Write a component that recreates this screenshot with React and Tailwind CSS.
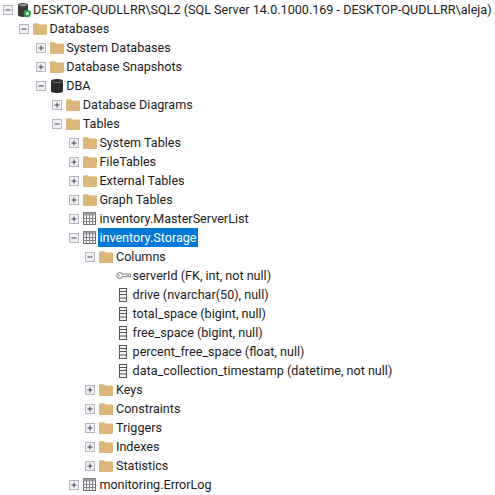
const tree = [
  {
    label: 'DESKTOP-QUDLLRR\\SQL2 (SQL Server 14.0.1000.169 - DESKTOP-QUDLLRR\\aleja)',
    icon: 'server',
    open: true,
    children: [
      {
        label: 'Databases',
        open: true,
        children: [
          { label: 'System Databases', closed: true },
          { label: 'Database Snapshots', closed: true },
          {
            label: 'DBA',
            icon: 'db',
            open: true,
            children: [
              { label: 'Database Diagrams', closed: true },
              {
                label: 'Tables',
                open: true,
                children: [
                  { label: 'System Tables', closed: true },
                  { label: 'FileTables', closed: true },
                  { label: 'External Tables', closed: true },
                  { label: 'Graph Tables', closed: true },
                  { label: 'inventory.MasterServerList', icon: 'table', closed: true },
                  {
                    label: 'inventory.Storage',
                    icon: 'table',
                    open: true,
                    selected: true,
                    children: [
                      {
                        label: 'Columns',
                        open: true,
                        children: [
                          { label: 'serverId (FK, int, not null)', icon: 'key' },
                          { label: 'drive (nvarchar(50), null)', icon: 'column' },
                          { label: 'total_space (bigint, null)', icon: 'column' },
                          { label: 'free_space (bigint, null)', icon: 'column' },
                          { label: 'percent_free_space (float, null)', icon: 'column' },
                          { label: 'data_collection_timestamp (datetime, not null)', icon: 'column' },
                        ],
                      },
                      { label: 'Keys', closed: true },
                      { label: 'Constraints', closed: true },
                      { label: 'Triggers', closed: true },
                      { label: 'Indexes', closed: true },
                      { label: 'Statistics', closed: true },
                    ],
                  },
                  { label: 'monitoring.ErrorLog', icon: 'table', closed: true },
                ],
              },
            ],
          },
        ],
      },
    ],
  },
];

function Expander({ open }) {
  return (
    <svg width="10" height="10" viewBox="0 0 10 10" className="shrink-0">
      <rect x="0.5" y="0.5" width="9" height="9" fill="#eef0f4" stroke="#b4b8bd" />
      <path d="M2.5 5h5" stroke="#3f4a5e" strokeWidth="1" />
      {!open && <path d="M5 2.5v5" stroke="#3f4a5e" strokeWidth="1" />}
    </svg>
  );
}

function NodeIcon({ type }) {
  if (type === 'server') {
    return (
      <svg width="16" height="16" viewBox="0 0 16 16">
        <path d="M2 3.2C2 1.8 4.4 1 7 1s5 .8 5 2.2V13c0 1.2-2.4 2-5 2s-5-.8-5-2z" fill="#3a3a3a" />
        <ellipse cx="7" cy="3.2" rx="3.6" ry="1.1" fill="#9a9a9a" />
        <circle cx="11.3" cy="11.5" r="3.7" fill="#2f9e3f" />
        <circle cx="11.3" cy="11.5" r="1.5" fill="#ffffff" />
      </svg>
    );
  }
  if (type === 'db') {
    return (
      <svg width="14" height="16" viewBox="0 0 14 16">
        <path d="M1 3c0-1.3 2.700-2 6-2s6 .7 6 2v10c0 1.300-2.700 2-6 2s-6-.7-6-2z" fill="#2b2b2b" />
        <path d="M2 3.400c1 .8 3 1.100 5 1.100s4-.3 5-1.100" fill="none" stroke="#8a8a8a" strokeWidth="0.8" />
      </svg>
    );
  }
  if (type === 'table') {
    return (
      <svg width="13" height="13" viewBox="0 0 13 13">
        <rect x="0.5" y="0.5" width="12" height="12" fill="#f6f6f6" stroke="#6a6d71" />
        <rect x="0.5" y="0.5" width="12" height="3" fill="#a0a3a7" />
        <path d="M3.500 .5v12M6.500 .5v12M9.500 .5v12M.5 6.500h12M.5 9.500h12" stroke="#85888c" strokeWidth="1" />
      </svg>
    );
  }
  if (type === 'key') {
    return (
      <svg width="15" height="9" viewBox="0 0 15 9">
        <ellipse cx="3.800" cy="4.500" rx="3.200" ry="2.800" fill="#fff" stroke="#6f6f6f" />
        <path d="M6.500 3h8v2.700h-2v-1h-1.500v1H6.500" fill="#fff" stroke="#6f6f6f" strokeWidth="0.9" />
        <circle cx="3" cy="4.500" r="0.800" fill="#6f6f6f" />
      </svg>
    );
  }
  if (type === 'column') {
    return (
      <svg width="10" height="14" viewBox="0 0 10 14">
        <rect x="1.500" y="0.500" width="7" height="13" fill="#f4f4f4" stroke="#55585c" />
        <path d="M1.500 3.500h7M1.500 6.500h7M1.500 10h7" stroke="#55585c" strokeWidth="1" />
      </svg>
    );
  }
  return (
    <svg width="14" height="13" viewBox="0 0 14 13">
      <path d="M0 2.500C0 1.700.5 1.200 1.200 1.200H5l1.200 1.300h6.600c.7 0 1.200.5 1.200 1.200v8c0 .7-.5 1.300-1.200 1.300H1.200C.5 13 0 12.400 0 11.700z" fill="#dcb77c" />
    </svg>
  );
}

function TreeNode({ node }) {
  const expandable = node.open || node.closed;
  return (
    <li>
      <div className="flex h-[19px] items-center">
        <span className="flex w-[15px] shrink-0 items-center justify-center">
          {expandable && <Expander open={node.open} />}
        </span>
        <span className="flex w-[17px] shrink-0 items-center justify-center">
          <NodeIcon type={node.icon} />
        </span>
        <span
          className={`whitespace-nowrap px-px text-[12.6px] leading-[19px] ${
            node.selected ? 'bg-[#0078d7] text-white' : 'text-[#1c1c1c]'
          }`}
        >
          {node.label}
        </span>
      </div>
      {node.children && (
        <ul className="pl-[16.6px]">
          {node.children.map((child) => (
            <TreeNode key={child.label} node={child} />
          ))}
        </ul>
      )}
    </li>
  );
}

export default function App() {
  return (
    <div className="h-[495px] w-[495px] overflow-hidden bg-white font-['Roboto','Noto_Sans',sans-serif]">
      <ul>
        {tree.map((node) => (
          <TreeNode key={node.label} node={node} />
        ))}
      </ul>
    </div>
  );
}
